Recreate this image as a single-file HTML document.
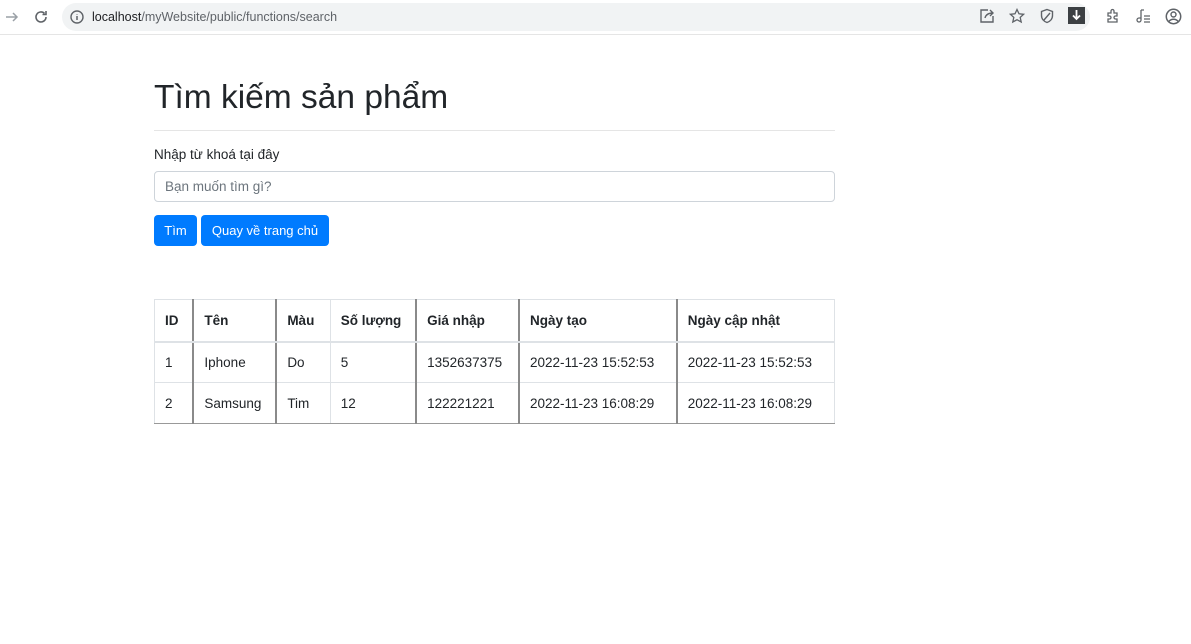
<!DOCTYPE html>
<html><head><meta charset="utf-8">
<style>
*{box-sizing:border-box;margin:0;padding:0}
body{width:1191px;height:644px;background:#fff;font-family:"Liberation Sans","DejaVu Sans",sans-serif;color:#212529;position:relative;overflow:hidden}
.bar{position:absolute;left:0;top:0;width:1191px;height:35px;background:#fff;border-bottom:1px solid #e5e5e5}
.url{position:absolute;left:62px;top:3px;width:1028px;height:28px;background:#f1f3f4;border-radius:14px}
.url span{position:absolute;left:30px;top:7px;font-size:12.5px;color:#5f6368}
.url b{color:#202124;font-weight:normal}
.ic{position:absolute;top:8px}
h1{position:absolute;left:154px;top:79px;font-size:33.5px;font-weight:normal;color:#212529;white-space:nowrap}
.hr{position:absolute;left:154px;top:130px;width:681px;height:1px;background:#e5e5e5}
.lbl{position:absolute;left:154px;top:147px;font-size:13.5px}
.inp{position:absolute;left:154px;top:171px;width:681px;height:31px;border:1px solid #ced4da;border-radius:4px;font-size:13.5px;color:#6c757d;padding:7px 10px}
.btn{position:absolute;top:215px;height:31px;background:#007bff;color:#fff;border-radius:4px;font-size:13px;padding:8px 0;text-align:center;white-space:nowrap}
table{position:absolute;left:154px;top:299px;border-collapse:collapse;font-size:13.5px;width:681px}
td,th{border:1px solid #dee2e6;padding:0 10px;text-align:left;height:41px;white-space:nowrap}
th{font-weight:bold;height:42px;border-bottom:2px solid #dee2e6}
table{border:1px solid #999}
.d{border-left:2px solid #8a8a8a}
tr:last-child td{border-bottom:1px solid #999}
</style></head><body>
<div class="bar">
<svg class="ic" style="left:4px" width="16" height="18" viewBox="0 0 16 18"><path d="M2 9h11M9 5l4 4-4 4" stroke="#9aa0a6" stroke-width="1.5" fill="none"/></svg>
<svg class="ic" style="left:32px" width="18" height="18" viewBox="0 0 18 18"><path d="M14 9a5 5 0 1 1-1.5-3.6M14 3v3.5h-3.5" stroke="#5f6368" stroke-width="1.6" fill="none"/></svg>
<div class="url">
<svg style="position:absolute;left:8px;top:7px" width="14" height="14" viewBox="0 0 14 14"><circle cx="7" cy="7" r="6" stroke="#5f6368" stroke-width="1.4" fill="none"/><path d="M7 6v4M7 4v.5" stroke="#5f6368" stroke-width="1.5"/></svg>
<span><b>localhost</b>/myWebsite/public/functions/search</span></div>
<svg class="ic" style="left:979px" width="16" height="16" viewBox="0 0 16 16"><path d="M9 2H2v12h12V8M6 10c1-4 4-5 8-5M11 2l3 3-3 3" stroke="#5f6368" stroke-width="1.4" fill="none"/></svg>
<svg class="ic" style="left:1009px" width="16" height="16" viewBox="0 0 16 16"><path d="M8 1.5l2 4.3 4.6.5-3.4 3.1 1 4.6L8 11.7 3.8 14l1-4.6L1.4 6.3l4.6-.5z" stroke="#5f6368" stroke-width="1.3" fill="none"/></svg>
<svg class="ic" style="left:1039px" width="16" height="16" viewBox="0 0 16 16"><path d="M8 1.5l5.5 2v4c0 3.5-2.5 6-5.5 7-3-1-5.5-3.5-5.5-7v-4z M11 5L5 12" stroke="#5f6368" stroke-width="1.4" fill="none"/></svg>
<svg class="ic" style="left:1068px;top:7px" width="17" height="17" viewBox="0 0 17 17"><rect width="17" height="17" fill="#3c4043"/><path d="M8.5 3v9M5 8.5l3.5 3.5 3.5-3.5" stroke="#fff" stroke-width="1.8" fill="none"/></svg>
<svg class="ic" style="left:1105px" width="16" height="16" viewBox="0 0 16 16"><path d="M3 5h3V3a1.5 1.5 0 0 1 3 0v2h3v3h-1.5a1.5 1.5 0 0 0 0 3H12v3H3v-3h1.5a1.5 1.5 0 0 0 0-3H3z" stroke="#5f6368" stroke-width="1.3" fill="none"/></svg>
<svg class="ic" style="left:1135px" width="16" height="16" viewBox="0 0 16 16"><path d="M6 2v10M6 2h3M6 12a2 2 0 1 1-2-2h2M9 8h6M9 11h6M9 14h6" stroke="#5f6368" stroke-width="1.3" fill="none"/></svg>
<svg class="ic" style="left:1165px" width="17" height="17" viewBox="0 0 17 17"><circle cx="8.5" cy="8.5" r="7.2" stroke="#5f6368" stroke-width="1.5" fill="none"/><circle cx="8.5" cy="6.5" r="2.5" stroke="#5f6368" stroke-width="1.4" fill="none"/><path d="M3.8 13.5c2.5-3 7-3 9.4 0" stroke="#5f6368" stroke-width="1.4" fill="none"/></svg>
</div>
<h1>Tìm kiếm sản phẩm</h1>
<div class="hr"></div>
<div class="lbl">Nhập từ khoá tại đây</div>
<div class="inp">Bạn muốn tìm gì?</div>
<div class="btn" style="left:154px;width:43px">Tìm</div>
<div class="btn" style="left:201px;width:128px">Quay về trang chủ</div>
<table>
<colgroup><col style="width:39px"><col style="width:83px"><col style="width:54px"><col style="width:86px"><col style="width:103px"><col style="width:158px"><col style="width:158px"></colgroup>
<tr><th>ID</th><th class="d">Tên</th><th class="d">Màu</th><th>Số lượng</th><th class="d">Giá nhập</th><th class="d">Ngày tạo</th><th class="d">Ngày cập nhật</th></tr>
<tr><td>1</td><td class="d">Iphone</td><td class="d">Do</td><td>5</td><td class="d">1352637375</td><td class="d">2022-11-23 15:52:53</td><td class="d">2022-11-23 15:52:53</td></tr>
<tr><td>2</td><td class="d">Samsung</td><td class="d">Tim</td><td>12</td><td class="d">122221221</td><td class="d">2022-11-23 16:08:29</td><td class="d">2022-11-23 16:08:29</td></tr>
</table>
</body></html>
